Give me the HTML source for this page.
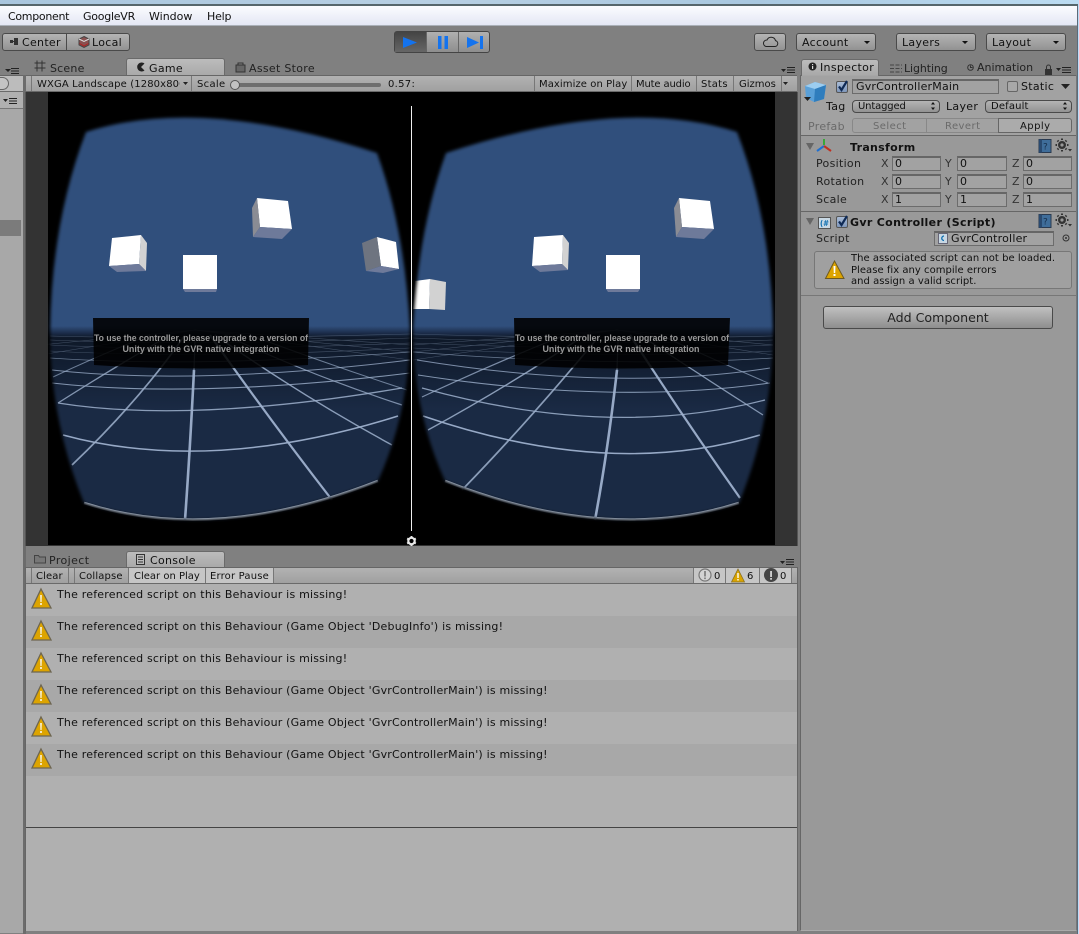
<!DOCTYPE html>
<html lang="en"><head><meta charset="utf-8"><title>Unity</title>
<style>
html,body{margin:0;padding:0}
body{width:1079px;height:934px;overflow:hidden;position:relative;background:#707070;font:11px "DejaVu Sans",sans-serif;color:#111}
div,span.t{position:absolute;box-sizing:border-box}
.t{white-space:nowrap;line-height:14px;height:14px}
svg{position:absolute;overflow:visible}
.btn{background:linear-gradient(#b4b4b4,#929292);border:1px solid #4a4a4a;border-radius:3px}
.bar{background:linear-gradient(#b2b2b2,#a0a0a0);border-top:1px solid #666;border-bottom:1px solid #6a6a6a}
.sep{width:1px;background:#777}
.tab{background:linear-gradient(#bcbcbc,#a8a8a8);border:1px solid #6a6a6a;border-bottom:0;border-radius:3px 3px 0 0}
.fld{background:#a2a2a2;border:1px solid #6c6c6c;border-top:2px solid #666;font-size:11px;padding-left:2px;line-height:12px;color:#111;white-space:nowrap}
.row{left:26px;width:771px;height:32px}
.msg{left:57px;font-size:11px;letter-spacing:.2px}
.lb{font-size:11px;letter-spacing:.3px}
.ts{font-size:10px;letter-spacing:.3px}
.chk{background:linear-gradient(#a9bcd6,#7f97bb);border:1px solid #555;border-radius:2px}
</style></head><body>
<!-- window chrome -->
<div style="left:0;top:0;width:1079px;height:5px;background:linear-gradient(90deg,#a9c6de,#b7cfe3 40%,#a9c8e0 70%,#bcdcf2)"></div>
<div style="left:0;top:4px;width:1079px;height:2px;background:#56666c"></div>
<div style="left:0;top:6px;width:1079px;height:19px;background:linear-gradient(#fbfcff,#e4e7f4)"></div>
<div style="left:0;top:25px;width:1079px;height:1px;background:#aab0b8"></div>
<span class="t" style="left:8px;top:10px;letter-spacing:-.3px">Component</span>
<span class="t" style="left:83px;top:10px;letter-spacing:-.25px">GoogleVR</span>
<span class="t" style="left:149px;top:10px">Window</span>
<span class="t" style="left:207px;top:10px;letter-spacing:-.2px">Help</span>
<div style="left:0;top:26px;width:1079px;height:908px;background:#808080"></div>
<div style="left:1078px;top:0;width:1px;height:934px;background:#bcdcf8"></div>
<div style="left:1077px;top:6px;width:1px;height:928px;background:#5c6a78"></div>

<!-- toolbar left -->
<div class="btn" style="left:2px;top:33px;width:65px;height:18px;border-radius:3px 0 0 3px"></div>
<div class="btn" style="left:66px;top:33px;width:64px;height:18px;border-radius:0 3px 3px 0"></div>
<svg style="left:10px;top:38px" width="9" height="8"><rect x="0" y="2" width="3" height="3" fill="#333"/><rect x="4" y="0" width="4" height="7" fill="#333"/><rect x="3" y="3" width="1" height="1" fill="#333"/></svg>
<span class="t lb" style="left:22px;top:36px">Center</span>
<svg style="left:78px;top:36px" width="12" height="12"><path d="M6 .5 11 3v6l-5 2.5L1 9V3z" fill="#8a5050" stroke="#444"/><path d="M1 3l5 2.5L11 3" fill="none" stroke="#ddd"/><path d="M1.500 7.500 6 10l4.500-2.500" stroke="#b02020" fill="none"/></svg>
<span class="t lb" style="left:92px;top:36px">Local</span>

<!-- play group -->
<div style="left:394px;top:31px;width:96px;height:22px;background:linear-gradient(#b0b0b0,#8e8e8e);border:1px solid #444;border-radius:3px"></div>
<div style="left:395px;top:32px;width:31px;height:20px;background:linear-gradient(#444,#666)"></div>
<div class="sep" style="left:426px;top:32px;height:20px;background:#666"></div>
<div class="sep" style="left:458px;top:32px;height:20px;background:#666"></div>
<svg style="left:394px;top:31px" width="96" height="22">
<path d="M9 6 23 11.500 9 17z" fill="#1473ee"/>
<rect x="44" y="5" width="3.500" height="13" fill="#1473ee"/><rect x="50.500" y="5" width="3.500" height="13" fill="#1473ee"/>
<path d="M73 6 85 11.500 73 17z" fill="#1473ee"/><rect x="86" y="5" width="3" height="13" fill="#1473ee"/>
</svg>

<!-- toolbar right -->
<div class="btn" style="left:754px;top:33px;width:32px;height:18px"></div>
<svg style="left:762px;top:36px" width="17" height="12"><path d="M4 10.500H13A3 3 0 0 0 13.500 4.600 4.500 4.500 0 0 0 5 4 3.300 3.300 0 0 0 4 10.500Z" fill="none" stroke="#222"/></svg>
<div class="btn" style="left:796px;top:33px;width:80px;height:18px"></div>
<span class="t lb" style="left:802px;top:36px">Account</span>
<div class="btn" style="left:896px;top:33px;width:80px;height:18px"></div>
<span class="t lb" style="left:902px;top:36px">Layers</span>
<div class="btn" style="left:986px;top:33px;width:80px;height:18px"></div>
<span class="t lb" style="left:992px;top:36px">Layout</span>
<svg style="left:0;top:0" width="1079" height="60"><path d="M864 41h6l-3 3zM962 41h6l-3 3zM1053 41h6l-3 3z" fill="#111"/></svg>

<!-- left strip -->
<div style="left:0;top:75px;width:23px;height:858px;background:#a8a8a8"></div>
<div style="left:0;top:75px;width:23px;height:17px;background:#bcbcbc;border-top:1px solid #666;border-bottom:1px solid #6a6a6a"></div>
<div style="left:-6px;top:77px;width:15px;height:13px;border:1px solid #666;border-radius:7px;background:#c4c4c4"></div>
<div style="left:0;top:92px;width:23px;height:17px;background:#b0b0b0;border-bottom:1px solid #777"></div>
<div style="left:0;top:220px;width:21px;height:16px;background:#7b7b7b"></div>
<div style="left:23px;top:75px;width:3px;height:859px;background:#6c6c6c"></div>
<svg style="left:0;top:0" width="30" height="110"><path d="M5 69h6l-3 3zM3 99h5l-2.500 3z" fill="#222"/><path d="M11 68.500h8M11 71h8M11 73.500h8M9 98.500h8M9 101h8M9 103.500h8" stroke="#222" fill="none"/></svg>

<!-- game tabs -->
<svg style="left:34px;top:60px" width="12" height="12"><path d="M3 .5v11M8 .5v11M.5 3h11M.5 8h11" stroke="#333" fill="none"/></svg>
<span class="t lb" style="left:50px;top:62px;color:#222;letter-spacing:.2px">Scene</span>
<div class="tab" style="left:126px;top:58px;width:99px;height:18px"></div>
<svg style="left:136px;top:62px" width="10" height="10"><path d="M8.500 1.500A4.500 4.500 0 1 0 8.500 8.500L5 5z" fill="#222"/></svg>
<span class="t lb" style="left:149px;top:62px">Game</span>
<svg style="left:235px;top:62px" width="11" height="11"><path d="M1 3h9v7H1z" fill="#666" stroke="#333"/><path d="M3 3V1h5v2" fill="none" stroke="#333"/></svg>
<span class="t lb" style="left:249px;top:62px;color:#222">Asset Store</span>
<svg style="left:781px;top:66px" width="14" height="9"><path d="M0 3h5l-2.500 3z" fill="#222"/><path d="M6 1.500h8M6 4h8M6 6.500h8" stroke="#222" fill="none"/></svg>

<!-- game toolbar -->
<div class="bar" style="left:26px;top:75px;width:771px;height:17px"></div>
<div class="sep" style="left:31px;top:76px;height:15px"></div>
<div class="sep" style="left:191px;top:76px;height:15px"></div>
<span class="t ts" style="left:37px;top:78px;width:143px;overflow:hidden;letter-spacing:.12px">WXGA Landscape (1280x800)</span>
<svg style="left:0;top:0" width="1079" height="100"><path d="M183 82h5l-2.500 3zM783 82h5l-2.500 3z" fill="#222"/></svg>
<span class="t ts" style="left:197px;top:78px">Scale</span>
<div style="left:231px;top:83px;width:150px;height:4px;background:#6e6e6e;border-radius:2px"></div>
<div style="left:230px;top:80px;width:10px;height:10px;background:#c2c2c2;border:1px solid #555;border-radius:50%"></div>
<span class="t ts" style="left:388px;top:78px">0.57:</span>
<div class="sep" style="left:534px;top:76px;height:15px"></div>
<div class="sep" style="left:631px;top:76px;height:15px"></div>
<div class="sep" style="left:696px;top:76px;height:15px"></div>
<div class="sep" style="left:733px;top:76px;height:15px"></div>
<div class="sep" style="left:781px;top:76px;height:15px"></div>
<span class="t ts" style="left:539px;top:78px;letter-spacing:.08px">Maximize on Play</span>
<span class="t ts" style="left:636px;top:78px;letter-spacing:-.15px">Mute audio</span>
<span class="t ts" style="left:701px;top:78px;letter-spacing:.25px">Stats</span>
<span class="t ts" style="left:739px;top:78px;letter-spacing:0">Gizmos</span>

<!-- game view -->
<div style="left:25px;top:92px;width:773px;height:454px;background:#333;border-left:1px solid #555;border-right:1px solid #555"></div>
<svg style="left:0;top:0" width="1079" height="560" viewBox="0 0 1079 560">
<defs>
<filter id="b" x="-5%" y="-5%" width="110%" height="110%"><feGaussianBlur stdDeviation="1.500"/></filter>
<filter id="s"><feGaussianBlur stdDeviation=".35"/></filter>
<linearGradient id="g" x1="0" y1="326" x2="0" y2="410" gradientUnits="userSpaceOnUse"><stop offset="0" stop-color="#304f7c"/><stop offset=".08" stop-color="#1c2e4c"/><stop offset=".14" stop-color="#0e1828"/><stop offset="1" stop-color="#1a2a44"/></linearGradient>
<mask id="ml" maskUnits="userSpaceOnUse" x="0" y="0" width="1079" height="560"><path filter="url(#b)" fill="#fff" d="M86 132Q200 95 377 153Q405 230 410 330Q410 410 378 481Q215 545 84 503Q50 420 50 330Q52 220 86 132Z"/></mask>
<mask id="mr" maskUnits="userSpaceOnUse" x="0" y="0" width="1079" height="560"><path filter="url(#b)" fill="#fff" d="M737 132Q623 95 446 153Q418 230 413 330Q413 410 445 481Q608 545 739 503Q773 420 773 330Q771 220 737 132Z"/></mask>
</defs>
<rect x="48" y="92" width="727" height="453" fill="#000"/>
<!-- left eye -->
<g mask="url(#ml)">
<rect x="40" y="100" width="375" height="230" fill="#304f7c"/>
<rect x="40" y="326" width="375" height="204" fill="url(#g)"/>
<g fill="none" stroke="#9db0cc" filter="url(#s)">
<g stroke-width=".6" opacity=".35"><path d="M50 336Q195 340 410 334M50 340Q195 346 410 338M50 345Q195 352 410 343M50 351Q195 359 410 348"/><path d="M195 330 40 345M195 330 40 355M195 330 410 345M195 330 410 352M195 330 410 360"/></g>
<g stroke-width=".8" opacity=".6"><path d="M50 358Q195 368 410 352"/></g>
<path stroke-width="1" opacity=".75" d="M52 370Q195 386 410 360"/>
<path stroke-width="1.100" opacity=".8" d="M52 383Q195 399 410 373"/>
<path stroke-width="1.300" opacity=".85" d="M58 403Q190 424 402 388"/>
<path stroke-width="1.500" opacity=".95" d="M63 435Q210 475 398 416"/>
<path stroke-width="2.600" d="M84 503Q215 545 378 481" stroke="#bccbe0"/>
<path stroke-width="1.200" opacity=".65" d="M195 340 194 370"/>
<path stroke-width="2.600" opacity=".95" d="M194 370Q190 450 185 520"/>
<path stroke-width="1.700" opacity=".85" d="M185 335Q140 400 72 465"/>
<path stroke-width="2.200" opacity=".95" d="M210 335Q270 420 332 500"/>
<path stroke-width="1.400" opacity=".85" d="M215 335Q300 395 392 445"/>
<path stroke-width="1.300" opacity=".8" d="M170 335Q110 370 58 403"/>
<path stroke-width="1.200" opacity=".75" d="M225 335Q310 375 402 405"/>
<path stroke-width="1" opacity=".65" d="M150 335Q100 355 53 377"/>
<path stroke-width="1" opacity=".65" d="M250 335Q330 365 407 390"/>
</g>
<path d="M93 318H309L308 365Q200 372 94 365Z" fill="#000" opacity=".88"/>
<g fill="#fff"><path d="M112 238 141 235 139 264 109 266Z"/><path d="M183 255H217V289H183Z"/><path d="M257 198 288 201 292 229 260 227Z"/><path d="M377 237 396 242 399 269 381 266Z"/></g>
<path d="M141 235 147 243 146 271 139 264Z" fill="#d2d2d2"/>
<path d="M109 266 139 264 146 271 117 272Z" fill="#6e7a9a"/>
<path d="M183 289H217L216 292H185Z" fill="#6e7a9a"/>
<path d="M257 198 252 208 253 237 260 227Z" fill="#8a8c94"/>
<path d="M260 227 292 229 282 239 253 237Z" fill="#6e7a9a"/>
<path d="M377 237 362 243 366 271 381 266Z" fill="#6e7480"/>
<path d="M366 271 381 266 399 269 383 273Z" fill="#6e7a9a"/>
</g>
<!-- right eye -->
<g mask="url(#mr)">
<rect x="410" y="100" width="375" height="230" fill="#304f7c"/>
<rect x="410" y="326" width="375" height="204" fill="url(#g)"/>
<g fill="none" stroke="#9db0cc" filter="url(#s)">
<g stroke-width=".6" opacity=".35"><path d="M413 334Q617 340 773 336M413 338Q617 346 773 340M413 343Q617 352 773 345M413 348Q617 359 773 351"/><path d="M617 330 773 345M617 330 773 355M617 330 413 345M617 330 413 352M617 330 413 360"/></g>
<g stroke-width=".8" opacity=".6"><path d="M413 352Q617 368 773 358"/></g>
<path stroke-width="1" opacity=".75" d="M417 360Q613 392 770 368"/>
<path stroke-width="1.100" opacity=".8" d="M418 375Q613 405 770 383"/>
<path stroke-width="1.300" opacity=".85" d="M422 388Q610 440 765 400"/>
<path stroke-width="1.500" opacity=".95" d="M423 416Q610 480 760 435"/>
<path stroke-width="2.600" stroke="#bccbe0" d="M445 481Q608 545 739 503"/>
<path stroke-width="1.200" opacity=".65" d="M618 340 617 370"/>
<path stroke-width="2.600" opacity=".95" d="M617 370Q608 450 595 520"/>
<path stroke-width="2.200" opacity=".95" d="M630 335Q685 420 740 498"/>
<path stroke-width="1.700" opacity=".85" d="M600 335Q530 420 462 490"/>
<path stroke-width="1.400" opacity=".85" d="M585 335Q510 385 428 430"/>
<path stroke-width="1.300" opacity=".8" d="M640 335Q700 375 763 415"/>
<path stroke-width="1.200" opacity=".75" d="M565 335Q490 365 422 397"/>
<path stroke-width="1" opacity=".65" d="M660 335Q715 360 768 383"/>
</g>
<path d="M514 318H730L728 365Q620 372 515 365Z" fill="#000" opacity=".88"/>
<g fill="#fff"><path d="M534 237 563 235 562 264 532 266Z"/><path d="M606 255H640V289H606Z"/><path d="M679 198 710 201 714 229 682 227Z"/><path d="M415 281 430 279 429 309 413 309Z"/></g>
<path d="M563 235 569 243 568 270 562 264Z" fill="#d2d2d2"/>
<path d="M532 266 562 264 568 270 540 272Z" fill="#6e7a9a"/>
<path d="M606 289H640L638 292H608Z" fill="#6e7a9a"/>
<path d="M679 198 674 208 676 237 682 227Z" fill="#8a8c94"/>
<path d="M682 227 714 229 704 239 676 237Z" fill="#6e7a9a"/>
<path d="M430 279 446 282 445 310 429 309Z" fill="#d2d2d2"/>
</g>
<g font-family="Liberation Sans" font-size="9" font-weight="bold" fill="#9a9a9a" text-anchor="middle">
<text x="201" y="341" textLength="214" lengthAdjust="spacingAndGlyphs">To use the controller, please upgrade to a version of</text>
<text x="201" y="352" textLength="157" lengthAdjust="spacingAndGlyphs">Unity with the GVR native integration</text>
<text x="622" y="341" textLength="214" lengthAdjust="spacingAndGlyphs">To use the controller, please upgrade to a version of</text>
<text x="621" y="352" textLength="157" lengthAdjust="spacingAndGlyphs">Unity with the GVR native integration</text>
</g>
<rect x="411" y="106" width="1" height="425" fill="#eee"/>
<g transform="translate(411.500 541)"><circle r="3.200" fill="none" stroke="#e8e8e8" stroke-width="2.200"/><path d="M0-5V-3M0 3V5M-4.300-2.500-2.600-1.500M2.600 1.500 4.300 2.500M-4.300 2.500-2.600 1.500M2.600-1.500 4.300-2.500" stroke="#e8e8e8" stroke-width="2"/></g>
</svg>

<!-- inspector -->
<div style="left:800px;top:75px;width:277px;height:856px;background:#999;border-left:1px solid #666;border-bottom:1px solid #aaa;border-right:1px solid #777"></div>
<div style="left:801px;top:75px;width:275px;height:61px;background:#a2a2a2;border-top:1px solid #666;border-bottom:1px solid #666"></div>
<div class="tab" style="left:801px;top:59px;width:78px;height:17px"></div>
<div style="left:802px;top:75px;width:76px;height:1px;background:#a6a6a6"></div>
<svg style="left:808px;top:62px" width="9" height="9"><circle cx="4.500" cy="4.500" r="4" fill="#222"/><rect x="4" y="2" width="1.200" height="1.200" fill="#ddd"/><rect x="4" y="4" width="1.200" height="3" fill="#ddd"/></svg>
<span class="t lb" style="left:820px;top:61px">Inspector</span>
<svg style="left:890px;top:63px" width="12" height="11"><path d="M0 2h12M0 5.500h12M0 9h12" stroke="#444" stroke-dasharray="4 1.500"/></svg>
<span class="t lb" style="left:904px;top:62px;color:#222;letter-spacing:-.1px">Lighting</span>
<svg style="left:967px;top:64px" width="7" height="7"><circle cx="3.500" cy="3.500" r="2.800" fill="none" stroke="#333"/><path d="M3.500 1.500v2h2" stroke="#333" fill="none"/></svg>
<span class="t lb" style="left:977px;top:61px;color:#222;letter-spacing:0">Animation</span>
<svg style="left:1044px;top:64px" width="28" height="12"><path d="M1 5h7v6H1z" fill="#333"/><path d="M2.500 5V3A2 2 0 0 1 6.500 3V5" fill="none" stroke="#333"/><path d="M12 4h5l-2.500 3z" fill="#222"/><path d="M18 3.500h9M18 6h9M18 8.500h9" stroke="#222"/></svg>
<!-- game object header -->
<svg style="left:804px;top:81px" width="23" height="25"><path d="M1 5 11 1 22 4 20 18 10 21 2 17Z" fill="#5aa0d8"/><path d="M1 5 11 8 22 4 11 1Z" fill="#9ccdf0"/><path d="M11 8 10 21 20 18 22 4Z" fill="#2f7dbd"/><path d="M0 16h7l-3.500 4z" fill="#222"/></svg>
<div class="chk" style="left:836px;top:81px;width:12px;height:12px"></div>
<svg style="left:836px;top:79px" width="13" height="14"><path d="M3 7.500 5.500 11 11 2" fill="none" stroke="#0f2a55" stroke-width="2.200"/></svg>
<div class="fld" style="left:852px;top:79px;width:147px;height:15px;padding-left:3px;letter-spacing:.2px">GvrControllerMain</div>
<div style="left:1007px;top:81px;width:11px;height:11px;background:#a8a8a8;border:1px solid #666;border-radius:2px"></div>
<span class="t lb" style="left:1021px;top:80px">Static</span>
<svg style="left:1061px;top:84px" width="9" height="6"><path d="M0 0h9L4.500 5z" fill="#222"/></svg>
<span class="t lb" style="left:826px;top:100px">Tag</span>
<div class="btn" style="left:852px;top:100px;width:88px;height:13px;border-radius:4px"></div>
<span class="t ts" style="left:858px;top:100px;letter-spacing:-.15px">Untagged</span>
<span class="t lb" style="left:946px;top:100px">Layer</span>
<div class="btn" style="left:985px;top:100px;width:87px;height:13px;border-radius:4px"></div>
<span class="t ts" style="left:991px;top:100px;letter-spacing:.15px">Default</span>
<svg style="left:0;top:0" width="1079" height="120"><path d="M931 104.500h4l-2-2.500zM931 107.500h4l-2 2.500zM1063 104.500h4l-2-2.500zM1063 107.500h4l-2 2.500z" fill="#111"/></svg>
<span class="t lb" style="left:808px;top:120px;color:#6a6a6a">Prefab</span>
<div class="btn" style="left:852px;top:118px;width:75px;height:15px;border-radius:3px 0 0 3px;background:#a2a2a2;border-color:#888"></div>
<div class="btn" style="left:926px;top:118px;width:73px;height:15px;border-radius:0;background:#a2a2a2;border-color:#888"></div>
<div class="btn" style="left:998px;top:118px;width:74px;height:15px;border-radius:0 3px 3px 0;background:#ababab;border-color:#666"></div>
<span class="t ts" style="left:873px;top:120px;color:#6a6a6a;letter-spacing:.45px">Select</span>
<span class="t ts" style="left:945px;top:120px;color:#6a6a6a;letter-spacing:.45px">Revert</span>
<span class="t ts" style="left:1020px;top:120px;letter-spacing:.45px">Apply</span>
<!-- transform -->
<svg style="left:806px;top:137px" width="270" height="95">
<path d="M0 6h8L4 13z M0 81h8L4 88z" fill="#666"/>
<path d="M18 8V2" stroke="#38a838" stroke-width="2"/><path d="M18 9 11 14" stroke="#2070d0" stroke-width="2"/><path d="M18 9 25 14" stroke="#c03020" stroke-width="2"/>
<path d="M233 2.500h12v13h-12z" fill="#3f6d9a" stroke="#2a3a50"/><path d="M233 2.500h3v13h-3z" fill="#2a4a70"/>
<text x="237" y="12.500" font-family="DejaVu Sans" font-size="9" fill="#16304e">?</text>
<g transform="translate(0 75)"><path d="M233 2.500h12v13h-12z" fill="#3f6d9a" stroke="#2a3a50"/><path d="M233 2.500h3v13h-3z" fill="#2a4a70"/><text x="237" y="12.500" font-family="DejaVu Sans" font-size="9" fill="#16304e">?</text></g>
<g fill="none" stroke="#333"><circle cx="256" cy="8" r="2.800" stroke-width="2.400"/><path d="M256 3v-1.500M256 14.500v-1.500M251 8h-1.500M262.500 8h-1.500M252.500 4.500 251.500 3.500M260.500 12.500 259.500 11.500M252.500 11.500 251.500 12.500M260.500 3.500 259.500 4.500" stroke-width="2"/><g transform="translate(0 75)"><circle cx="256" cy="8" r="2.800" stroke-width="2.400"/><path d="M256 3v-1.500M256 14.500v-1.500M251 8h-1.500M262.500 8h-1.500M252.500 4.500 251.500 3.500M260.500 12.500 259.500 11.500M252.500 11.500 251.500 12.500M260.500 3.500 259.500 4.500" stroke-width="2"/></g></g>
<path d="M262 12h4l-2 2.500zM262 87h4l-2 2.500z" fill="#333"/>
</svg>
<span class="t" style="left:850px;top:141px;font-weight:bold;letter-spacing:.3px">Transform</span>
<span class="t lb" style="left:816px;top:157px;color:#222">Position</span>
<span class="t lb" style="left:816px;top:175px;color:#222">Rotation</span>
<span class="t lb" style="left:816px;top:193px;color:#222">Scale</span>
<span class="t" style="left:881px;top:157px;color:#333">X</span><span class="t" style="left:945px;top:157px;color:#333">Y</span><span class="t" style="left:1012px;top:157px;color:#333">Z</span>
<span class="t" style="left:881px;top:175px;color:#333">X</span><span class="t" style="left:945px;top:175px;color:#333">Y</span><span class="t" style="left:1012px;top:175px;color:#333">Z</span>
<span class="t" style="left:881px;top:193px;color:#333">X</span><span class="t" style="left:945px;top:193px;color:#333">Y</span><span class="t" style="left:1012px;top:193px;color:#333">Z</span>
<div class="fld" style="left:892px;top:156px;width:49px;height:15px">0</div><div class="fld" style="left:957px;top:156px;width:50px;height:15px">0</div><div class="fld" style="left:1023px;top:156px;width:49px;height:15px">0</div>
<div class="fld" style="left:892px;top:174px;width:49px;height:15px">0</div><div class="fld" style="left:957px;top:174px;width:50px;height:15px">0</div><div class="fld" style="left:1023px;top:174px;width:49px;height:15px">0</div>
<div class="fld" style="left:892px;top:192px;width:49px;height:15px">1</div><div class="fld" style="left:957px;top:192px;width:50px;height:15px">1</div><div class="fld" style="left:1023px;top:192px;width:49px;height:15px">1</div>
<div style="left:801px;top:211px;width:275px;height:1px;background:#666"></div>
<!-- script -->
<svg style="left:818px;top:217px" width="13" height="12"><path d="M.5.5h12v11H.5z" fill="#c8d8e4" stroke="#555"/><text x="2" y="9" font-family="DejaVu Sans" font-weight="bold" font-size="8" fill="#0f6fb0" textLength="9" lengthAdjust="spacingAndGlyphs">(#</text></svg>
<div class="chk" style="left:836px;top:216px;width:12px;height:12px"></div>
<svg style="left:836px;top:214px" width="13" height="14"><path d="M3 7.500 5.500 11 11 2" fill="none" stroke="#0f2a55" stroke-width="2.200"/></svg>
<span class="t" style="left:850px;top:216px;font-weight:bold;letter-spacing:.33px">Gvr Controller (Script)</span>
<span class="t lb" style="left:816px;top:232px;color:#222">Script</span>
<div class="fld" style="left:934px;top:231px;width:120px;height:15px;padding-left:16px;letter-spacing:.2px">GvrController</div>
<svg style="left:938px;top:233px" width="10" height="11"><path d="M.5.500h9v10h-9z" fill="#c8d8e4" stroke="#667"/><path d="M6 3A2 2 0 1 0 6 7.500" fill="none" stroke="#0f6fb0" stroke-width="1.300"/></svg>
<svg style="left:1062px;top:234px" width="8" height="8"><circle cx="4" cy="4" r="3" fill="none" stroke="#333"/><circle cx="4" cy="4" r="1" fill="#333"/></svg>
<div style="left:814px;top:251px;width:258px;height:38px;background:#a0a0a0;border:1px solid #777;border-radius:3px"></div>
<svg style="left:825px;top:260px" width="20" height="20"><path d="M9.500 1 19 18.500H.500Z" fill="#dda400" stroke="#6e5a20"/><path d="M8.500 6h2l-.3 7h-1.400z" fill="#fff"/><rect x="8.500" y="14" width="2" height="2" fill="#fff"/></svg>
<span class="t ts" style="left:851px;top:252px;letter-spacing:.03px">The associated script can not be loaded.</span>
<span class="t ts" style="left:851px;top:264px;letter-spacing:.03px">Please fix any compile errors</span>
<span class="t ts" style="left:851px;top:275px;letter-spacing:.03px">and assign a valid script.</span>
<div style="left:801px;top:295px;width:275px;height:1px;background:#777"></div>
<div class="btn" style="left:823px;top:306px;width:230px;height:23px;background:linear-gradient(#c0c0c0,#8e8e8e);font-size:12.600px;text-align:center;line-height:22px;color:#222">Add Component</div>

<!-- bottom tabs -->
<svg style="left:34px;top:554px" width="12" height="10"><path d="M.5 1.500h4l1 1.500h6v6h-11z" fill="#777" stroke="#444"/></svg>
<span class="t lb" style="left:49px;top:554px;color:#222;letter-spacing:.4px">Project</span>
<div class="tab" style="left:126px;top:551px;width:99px;height:17px"></div>
<svg style="left:136px;top:554px" width="10" height="11"><path d="M.5.500h8v10h-8z" fill="#bbb" stroke="#333"/><path d="M2 3h5M2 5.500h5M2 8h5" stroke="#333"/></svg>
<span class="t lb" style="left:150px;top:554px">Console</span>
<svg style="left:780px;top:558px" width="14" height="9"><path d="M0 3h5l-2.500 3z" fill="#222"/><path d="M6 1.500h8M6 4h8M6 6.500h8" stroke="#222" fill="none"/></svg>
<div style="left:25px;top:567px;width:773px;height:364px;background:#b0b0b0;border-left:1px solid #666;border-right:1px solid #666"></div>
<div class="bar" style="left:26px;top:567px;width:771px;height:17px"></div>
<div class="sep" style="left:31px;top:568px;height:15px"></div><div class="sep" style="left:68px;top:568px;height:15px"></div><div class="sep" style="left:74px;top:568px;height:15px"></div>
<div style="left:128px;top:568px;width:78px;height:15px;background:#c6c6c6;border-left:1px solid #777;border-right:1px solid #777"></div>
<div style="left:206px;top:568px;width:68px;height:15px;background:#c6c6c6;border-right:1px solid #777"></div>
<span class="t ts" style="left:36px;top:570px;letter-spacing:.1px">Clear</span><span class="t ts" style="left:79px;top:570px;letter-spacing:.15px">Collapse</span><span class="t ts" style="left:134px;top:570px;letter-spacing:0">Clear on Play</span><span class="t ts" style="left:210px;top:570px;letter-spacing:.18px">Error Pause</span>
<div style="left:693px;top:568px;width:99px;height:15px;background:#c6c6c6;border-left:1px solid #777;border-right:1px solid #777"></div>
<div class="sep" style="left:725px;top:568px;height:15px"></div><div class="sep" style="left:759px;top:568px;height:15px"></div>
<svg style="left:697px;top:568px" width="90" height="15">
<circle cx="8" cy="7" r="6" fill="#d4d4d4" stroke="#777" stroke-width="1.200"/><rect x="7.200" y="3" width="1.600" height="5.500" fill="#777"/><rect x="7.200" y="9.500" width="1.600" height="1.600" fill="#777"/>
<path d="M41 1 47.500 14H34.500Z" fill="#d9a400" stroke="#8a7020" stroke-width=".8"/><rect x="40.300" y="5" width="1.400" height="5" fill="#fff"/><rect x="40.300" y="11" width="1.400" height="1.500" fill="#fff"/>
<circle cx="74" cy="7" r="7" fill="#444"/><rect x="73.200" y="3" width="1.700" height="6" fill="#ddd"/><rect x="73.200" y="10" width="1.700" height="1.700" fill="#ddd"/>
</svg>
<span class="t ts" style="left:714px;top:570px">0</span><span class="t ts" style="left:747px;top:570px">6</span><span class="t ts" style="left:780px;top:570px">0</span>
<!-- rows -->
<div class="row" style="top:616px;background:#a8a8a8"></div>
<div class="row" style="top:680px;background:#a8a8a8"></div>
<div class="row" style="top:744px;background:#a8a8a8"></div>
<svg style="left:31px;top:588px" width="21" height="182">
<defs><g id="w"><path d="M10 1 20 20H1Z" fill="#dda400" stroke="#6e6650" stroke-width="1.300"/><path d="M9 7h2l-.3 7h-1.400z" fill="#f4e8c0"/><rect x="9" y="15" width="2" height="2" fill="#f4e8c0"/></g></defs>
<use href="#w"/><use href="#w" y="32"/><use href="#w" y="64"/><use href="#w" y="96"/><use href="#w" y="128"/><use href="#w" y="160"/>
</svg>
<span class="t msg" style="top:588px">The referenced script on this Behaviour is missing!</span>
<span class="t msg" style="top:620px">The referenced script on this Behaviour (Game Object 'DebugInfo') is missing!</span>
<span class="t msg" style="top:652px">The referenced script on this Behaviour is missing!</span>
<span class="t msg" style="top:684px">The referenced script on this Behaviour (Game Object 'GvrControllerMain') is missing!</span>
<span class="t msg" style="top:716px">The referenced script on this Behaviour (Game Object 'GvrControllerMain') is missing!</span>
<span class="t msg" style="top:748px">The referenced script on this Behaviour (Game Object 'GvrControllerMain') is missing!</span>
<div style="left:26px;top:827px;width:771px;height:1px;background:#444"></div>
</body></html>
